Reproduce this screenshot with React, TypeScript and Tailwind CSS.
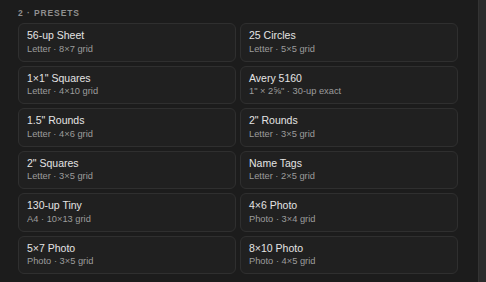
import React from 'react';

interface Preset {
  name: string;
  detail: string;
}

const presets: Preset[] = [
  { name: '56-up Sheet', detail: 'Letter · 8×7 grid' },
  { name: '25 Circles', detail: 'Letter · 5×5 grid' },
  { name: '1×1" Squares', detail: 'Letter · 4×10 grid' },
  { name: 'Avery 5160', detail: '1" × 2⅝" · 30-up exact' },
  { name: '1.5" Rounds', detail: 'Letter · 4×6 grid' },
  { name: '2" Rounds', detail: 'Letter · 3×5 grid' },
  { name: '2" Squares', detail: 'Letter · 3×5 grid' },
  { name: 'Name Tags', detail: 'Letter · 2×5 grid' },
  { name: '130-up Tiny', detail: 'A4 · 10×13 grid' },
  { name: '4×6 Photo', detail: 'Photo · 3×4 grid' },
  { name: '5×7 Photo', detail: 'Photo · 3×5 grid' },
  { name: '8×10 Photo', detail: 'Photo · 4×5 grid' },
];

const PresetCard: React.FC<{ preset: Preset }> = ({ preset }) => (
  <button className="h-[38.5px] box-border rounded-[6px] border border-[#2f2f2f] bg-[#202020] pl-[8px] pt-[4px] text-left flex flex-col">
    <span className="text-[10.5px] leading-[14px] text-[#e4e4e4]">{preset.name}</span>
    <span className="mt-[0.5px] text-[9.3px] leading-[12px] text-[#9c9c9c]">{preset.detail}</span>
  </button>
);

export default function App() {
  return (
    <div
      className="flex h-[282px] w-[486px] overflow-hidden bg-[#1c1c1c]"
      style={{ fontFamily: '"Liberation Sans", Arial, sans-serif' }}
    >
      <div className="flex-1 pl-[18px] pt-[7px]">
        <div className="mb-[4px] text-[8.5px] font-bold uppercase leading-[12px] tracking-[0.9px] text-[#909090]">
          2 · Presets
        </div>
        <div className="grid w-[440px] grid-cols-2 gap-x-[4px] gap-y-[4px]">
          {presets.map((p) => (
            <PresetCard key={p.name} preset={p} />
          ))}
        </div>
      </div>
      <div className="w-[8px] h-full bg-[#2b2b2b] border-l border-[#333333]" />
    </div>
  );
}
